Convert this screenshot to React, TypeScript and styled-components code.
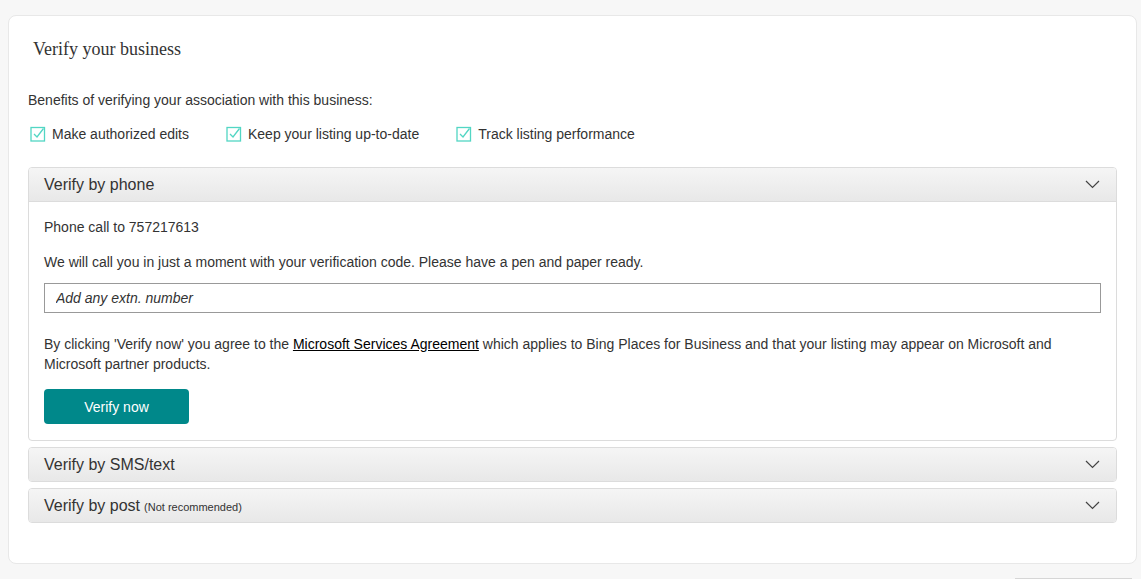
import React from "react";
import styled, { createGlobalStyle } from "styled-components";

const GlobalStyle = createGlobalStyle`
  html, body { margin: 0; padding: 0; background: #f7f7f7; }
  body { font-family: "Liberation Sans", Arial, sans-serif; color: #333; }
`;

const Page = styled.div`
  padding: 15px 4px 0 8px;
  height: 579px;
  box-sizing: border-box;
  overflow: hidden;
`;

const Card = styled.section`
  background: #fff;
  border: 1px solid #e8e8e8;
  border-radius: 8px;
  padding: 23px 19px 40px 19px;
  display: flex;
  flex-direction: column;
`;

const Title = styled.h2`
  margin: 0 0 31px 5px;
  font-family: "Liberation Serif", "Times New Roman", serif;
  font-weight: normal;
  font-size: 18px;
  line-height: 20px;
  color: #333;
`;

const Lead = styled.p`
  margin: 0 0 14px 0;
  font-size: 14px;
  line-height: 20px;
`;

const Benefits = styled.ul`
  list-style: none;
  margin: 0 0 23px 0;
  padding: 0;
  display: flex;
  gap: 35px;
`;

const Benefit = styled.li`
  display: flex;
  align-items: center;
  gap: 6px;
  font-size: 14px;
  line-height: 20px;
  padding-left: 2px;
`;

const Accordion = styled.div`
  display: flex;
  flex-direction: column;
  gap: 6px;
`;

const Panel = styled.div`
  border: 1px solid #dcdcdc;
  border-radius: 4px;
  overflow: hidden;
  background: #fff;
`;

const Header = styled.div<{ $open?: boolean }>`
  height: 33px;
  display: flex;
  align-items: center;
  justify-content: space-between;
  padding: 0 16px 0 15px;
  background: linear-gradient(#f5f5f5, #e8e8e8);
  border-bottom: ${(p) => (p.$open ? "1px solid #dcdcdc" : "none")};
  font-size: 16px;
  color: #333;
`;

const Note = styled.span`
  font-size: 11px;
  margin-left: 4px;
`;

const Body = styled.div`
  padding: 15px 15px 16px 15px;
  display: flex;
  flex-direction: column;
  align-items: flex-start;
`;

const Text = styled.p<{ $mb: number }>`
  margin: 0 0 ${(p) => p.$mb}px 0;
  font-size: 14px;
  line-height: 20px;
`;

const Input = styled.input`
  width: 100%;
  height: 30px;
  box-sizing: border-box;
  border: 1px solid #999;
  padding: 0 11px;
  margin: 0 0 21px 0;
  font-family: "Liberation Sans", Arial, sans-serif;
  font-size: 14px;
  font-style: italic;
  color: #333;
  &::placeholder { color: #333; opacity: 1; }
`;

const Link = styled.a`
  color: #000;
  text-decoration: underline;
`;

const Button = styled.button`
  width: 145px;
  height: 35px;
  border: none;
  border-radius: 4px;
  background: #00888a;
  color: #fff;
  font-family: "Liberation Sans", Arial, sans-serif;
  font-size: 14px;
`;

const Footer = styled.div`
  display: flex;
  justify-content: flex-end;
  padding: 14px 5px 0 0;
`;

const FooterButton = styled.div`
  width: 117px;
  height: 30px;
  border-top: 2px solid #d6d6d6;
  background: #f0f0f0;
`;

const CheckIcon = () => (
  <svg width="16" height="16" viewBox="0 0 16 16" fill="none">
    <rect x="1" y="1.5" width="13.5" height="13.5" stroke="#52d6c4" strokeWidth="1.3" />
    <path d="M4 8 L7 11 L13.5 2.5" stroke="#52d6c4" strokeWidth="1.3" fill="none" />
  </svg>
);

const Chevron = () => (
  <svg width="15" height="9" viewBox="0 0 15 9" fill="none">
    <path d="M1 1 L7.5 7.5 L14 1" stroke="#444" strokeWidth="1.2" />
  </svg>
);

export default function App() {
  return (
    <>
      <GlobalStyle />
      <Page>
        <Card>
          <Title>Verify your business</Title>
          <Lead>Benefits of verifying your association with this business:</Lead>
          <Benefits>
            <Benefit><CheckIcon />Make authorized edits</Benefit>
            <Benefit><CheckIcon />Keep your listing up-to-date</Benefit>
            <Benefit><CheckIcon />Track listing performance</Benefit>
          </Benefits>
          <Accordion>
            <Panel>
              <Header $open>
                <span>Verify by phone</span>
                <Chevron />
              </Header>
              <Body>
                <Text $mb={15}>Phone call to 757217613</Text>
                <Text $mb={11}>We will call you in just a moment with your verification code. Please have a pen and paper ready.</Text>
                <Input placeholder="Add any extn. number" />
                <Text $mb={15}>
                  By clicking 'Verify now' you agree to the <Link href="#">Microsoft Services Agreement</Link> which applies to Bing Places for Business and that your listing may appear on Microsoft and Microsoft partner products.
                </Text>
                <Button>Verify now</Button>
              </Body>
            </Panel>
            <Panel>
              <Header>
                <span>Verify by SMS/text</span>
                <Chevron />
              </Header>
            </Panel>
            <Panel>
              <Header>
                <span>Verify by post<Note>(Not recommended)</Note></span>
                <Chevron />
              </Header>
            </Panel>
          </Accordion>
        </Card>
        <Footer>
          <FooterButton />
        </Footer>
      </Page>
    </>
  );
}
